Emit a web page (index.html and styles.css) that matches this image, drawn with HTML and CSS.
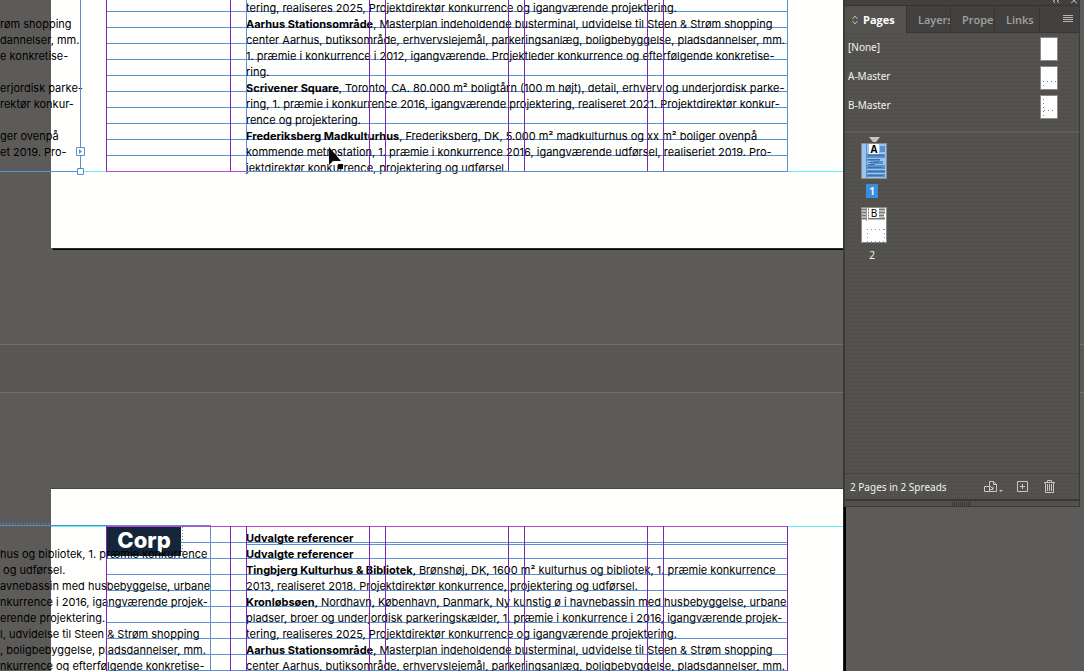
FILE: index.html
```html
<!DOCTYPE html>
<html lang="da">
<head>
<meta charset="utf-8">
<title>Pages</title>
<link rel="stylesheet" href="styles.css">
</head>
<body>
<div class="workspace">
  <main class="pasteboard">
    <section class="spread spread-first">
      <div class="page"></div>
      <svg class="guides" aria-hidden="true">
        <path class="baseline" d="M107 11.5H787M107 27.5H787M107 43.5H787M107 59.5H787M107 75.5H787M107 91.5H787M107 107.5H787M107 123.5H787M107 139.5H787M107 155.5H787"/>
      </svg>
      <div class="spread-content">
        <div class="frame-left">
          <p>&nbsp;</p>
          <p>røm shopping</p>
          <p>dannelser, mm.</p>
          <p>e konkretise-</p>
          <p>&nbsp;</p>
          <p>erjordisk parke-</p>
          <p>rektør konkur-</p>
          <p>&nbsp;</p>
          <p>ger ovenpå</p>
          <p>et 2019. Pro-</p>
        </div>
        <div class="frame-main">
          <p>tering, realiseres 2025, Projektdirektør konkurrence og igangværende projektering.</p>
          <p><b>Aarhus Stationsområde</b>, Masterplan indeholdende busterminal, udvidelse til Steen &amp; Strøm shopping</p>
          <p>center Aarhus, butiksområde, erhvervslejemål, parkeringsanlæg, boligbebyggelse, pladsdannelser, mm.</p>
          <p>1. præmie i konkurrence i 2012, igangværende. Projektleder konkurrence og efterfølgende konkretise-</p>
          <p>ring.</p>
          <p><b>Scrivener Square</b>, Toronto, CA. 80.000 m² boligtårn (100 m højt), detail, erhverv og underjordisk parke-</p>
          <p>ring, 1. præmie i konkurrence 2016, igangværende projektering, realiseret 2021. Projektdirektør konkur-</p>
          <p>rence og projektering.</p>
          <p><b>Frederiksberg Madkulturhus</b>, Frederiksberg, DK, 5.000 m² madkulturhus og xx m² boliger ovenpå</p>
          <p>kommende metrostation, 1. præmie i konkurrence 2016, igangværende udførsel, realiseriet 2019. Pro-</p>
          <p>jektdirektør konkurrence, projektering og udførsel.</p>
        </div>
      </div>
      <svg class="guides" aria-hidden="true">
        <path class="bleed" d="M81 171.5H106M788 171.5H843"/>
        <path class="margin" d="M106 171.5H246"/>
        <path class="column" d="M106.500 0V171M230.500 0V171M369.500 0V171M385.500 0V171M508.500 0V171M524.500 0V171M647.500 0V171M663.500 0V171"/>
        <path class="frame-edge" d="M0 171.500H80M80.500 0V171M246.500 0V171M246 171.500H788M787.500 0V171"/>
        <path class="handle" d="M76.500 147.500h8v8h-8zM77.500 168.500h6v6h-6z"/>
        <path class="handle-arrow" d="M79 149l3 2.500-3 2.500z"/>
        <path class="cursor" d="M329 147v18l4-4h8z"/>
        <path class="cursor-mark" d="M338 164h5v5h-5z"/>
      </svg>
    </section>

    <div class="spread-gap"></div>

    <section class="spread spread-second">
      <div class="page"></div>
      <svg class="guides" aria-hidden="true">
        <path class="baseline" d="M181 53.500H787M246 55.500H787M107 69.500H787M107 85.500H787M107 101.500H787M107 117.500H787M107 133.500H787M107 149.500H787M107 165.500H787M107 181.500H787"/>
      </svg>
      <div class="spread-content">
        <div class="logo">Corp</div>
        <div class="frame-left">
          <p>hus og bibliotek, 1. præmie konkurrence</p>
          <p>&nbsp;og udførsel.</p>
          <p>avnebassin med husbebyggelse, urbane</p>
          <p>nkurrence i 2016, igangværende projek-</p>
          <p>erende projektering.</p>
          <p>l, udvidelse til Steen &amp; Strøm shopping</p>
          <p>, boligbebyggelse, pladsdannelser, mm.</p>
          <p>nkurrence og efterfølgende konkretise-</p>
        </div>
        <div class="frame-main">
          <p><b>Udvalgte referencer</b></p>
          <p><b>Udvalgte referencer</b></p>
          <p><b>Tingbjerg Kulturhus &amp; Bibliotek</b>, Brønshøj, DK, 1600 m² kulturhus og bibliotek, 1. præmie konkurrence</p>
          <p>2013, realiseret 2018. Projektdirektør konkurrence, projektering og udførsel.</p>
          <p><b>Kronløbsøen</b>, Nordhavn, København, Danmark, Ny kunstig ø i havnebassin med husbebyggelse, urbane</p>
          <p>pladser, broer og underjordisk parkeringskælder, 1. præmie i konkurrence i 2016, igangværende projek-</p>
          <p>tering, realiseres 2025, Projektdirektør konkurrence og igangværende projektering.</p>
          <p><b>Aarhus Stationsområde</b>, Masterplan indeholdende busterminal, udvidelse til Steen &amp; Strøm shopping</p>
          <p>center Aarhus, butiksområde, erhvervslejemål, parkeringsanlæg, boligbebyggelse, pladsdannelser, mm.</p>
        </div>
      </div>
      <svg class="guides" aria-hidden="true">
        <path class="bleed" d="M51 37.500H106M788 37.500H843"/>
        <path class="frame-edge" d="M0 36.500H210M210.500 36V182"/>
        <path class="frame-dots" d="M0 34.500H51M182.500 38V64"/>
        <path class="margin" d="M106 37.500H788"/>
        <path class="column" d="M106.500 37V182M230.500 37V182M246.500 37V182M369.500 37V182M385.500 37V182M508.500 37V182M524.500 37V182M647.500 37V182M663.500 37V182M787.500 37V182"/>
      </svg>
    </section>
  </main>

  <aside class="panel">
    <div class="panel-top">
      <svg width="30" height="5" viewBox="0 0 30 5" aria-hidden="true"><path d="M6 0l-2 1 2 2M10 0L8 1l2 2M22 3l4-3M28 3l-4-3" fill="none" stroke="#bbb"/></svg>
    </div>
    <div class="tabs" role="tablist">
      <button class="tab tab-active" role="tab" aria-selected="true"><svg width="6" height="10" viewBox="0 0 6 10" aria-hidden="true"><path d="M.5 4L3 1l2.500 3M.5 6L3 9l2.500-3" fill="none" stroke="#bbb"/></svg>Pages</button>
      <button class="tab" role="tab">Layers</button>
      <button class="tab" role="tab">Prope</button>
      <button class="tab" role="tab">Links</button>
      <button class="menu" aria-label="Panel menu"><svg width="10" height="8" viewBox="0 0 10 8" aria-hidden="true"><path d="M0 .5h10M0 2.500h10M0 4.500h10M0 6.500h10" stroke="#b5b4b2"/></svg></button>
    </div>
    <ul class="masters">
      <li><span>[None]</span><svg class="master-thumb" viewBox="0 0 16 22" aria-hidden="true"></svg></li>
      <li><span>A-Master</span><svg class="master-thumb" viewBox="0 0 16 22" aria-hidden="true"><path d="M2 14.500h13M2 18.500h1" stroke="#5d86a8" stroke-dasharray="1 3"/></svg></li>
      <li><span>B-Master</span><svg class="master-thumb" viewBox="0 0 16 22" aria-hidden="true"><path d="M2.500 3v17M3 14.500h12" stroke="#5d86a8" stroke-dasharray="1 3"/></svg></li>
    </ul>
    <div class="page-list">
      <svg class="marker" width="11" height="6" viewBox="0 0 11 6" aria-hidden="true"><path d="M0 0h11L7 5H4z" fill="#c6c5c3"/></svg>
      <div class="thumb thumb-selected">
        <svg width="24" height="34" viewBox="0 0 24 34" aria-hidden="true">
          <rect width="24" height="34" fill="#9cc4f0"/>
          <path d="M4 0h1v34H4zM18 2h5v6h-5zM5 10h18v4H5zM5 15h13v2H5zM9 17h12v3H9zM5 21h18v4H5zM5 26h18v3H5zM5 30h18v3H5z" fill="#5a8fca"/>
          <path d="M6 11.500h16M6 15.500h12M6 18.500h4M12 18.500h5M6 20.500h7M6 23.500h14M6 27.500h17M6 31.500h15" stroke="#3a72ad"/>
        </svg>
        <b class="thumb-letter">A</b>
      </div>
      <span class="number number-selected">1</span>
      <div class="thumb">
        <svg width="24" height="34" viewBox="0 0 24 34" aria-hidden="true">
          <rect width="24" height="34" fill="#fff"/>
          <path d="M0 1.500h4M0 4.500h4M0 7.500h4M0 10.500h4M6 1.500h17M6 4.500h17M6 7.500h16M6 10.500h17" stroke="#777" stroke-width="2"/>
          <path d="M4.500 0v13" stroke="#999"/>
          <path d="M5 21.500h18M5 33.500h18M5.500 21v12M22.500 21v12" stroke="#6f9cd0" stroke-dasharray="1 3" fill="none"/>
        </svg>
        <span class="thumb-letter">B</span>
      </div>
      <span class="number">2</span>
    </div>
    <footer class="panel-footer">
      <span class="summary">2 Pages in 2 Spreads</span>
      <button aria-label="Edit page size"><svg width="19" height="12" viewBox="0 0 19 12" aria-hidden="true"><path d="M.5 5.500h5v5h-5zM5.500 5.500V.5h4l3 3v7h-7M9.500.5v3h3M6 5l3 3M9 5.500v3H6" fill="none" stroke="#c8c7c5"/><path d="M15 9h4l-2 2z" fill="#c8c7c5"/></svg></button>
      <button aria-label="New page"><svg width="11" height="11" viewBox="0 0 11 11" aria-hidden="true"><path d="M.5.5h10v10H.5zM5.500 3v5M3 5.500h5" fill="none" stroke="#c8c7c5"/></svg></button>
      <button aria-label="Delete page"><svg width="11" height="13" viewBox="0 0 11 13" aria-hidden="true"><path d="M0 2.500h11M3.500 2.500v-2h4v2M1.500 3v9.500h8V3M3.500 4v7M5.500 4v7M7.500 4v7" fill="none" stroke="#c8c7c5"/></svg></button>
    </footer>
    <div class="grip"><span></span></div>
  </aside>
</div>
</body>
</html>
```

FILE: styles.css
```css
* {
  box-sizing: border-box;
}

body {
  margin: 0;
  background: #5c5b59;
  font-family: "Noto Sans", "Open Sans", sans-serif;
}

p, ul {
  margin: 0;
  padding: 0;
}

button {
  border: 0;
  padding: 0;
  background: none;
  font: inherit;
  color: inherit;
}

.workspace {
  position: relative;
  height: 100vh;
  overflow: hidden;
}

/* Pasteboard and spreads */

.pasteboard {
  display: flex;
  flex-direction: column;
  height: 100%;
}

.spread {
  display: grid;
  position: relative;
  grid-template-columns: minmax(0, 1fr) 241px;
}

.spread-first {
  flex: 0 0 250px;
}

.spread-second {
  flex: 1;
  min-height: 0;
}

.page,
.spread-content {
  grid-area: 1 / 1;
}

.page {
  margin-left: 51px;
  background: #fffffe;
}

.spread-first .page {
  margin-bottom: 2px;
  box-shadow: 1px 1px 0 #2c2b29, 2px 2px 0 #000;
}

.spread-second .page {
  box-shadow: 0 -1px 0 #454442, 1px 1px 0 #222, 3px 2px 0 #000;
}

.spread-content {
  display: grid;
  grid-template-columns: 246px minmax(0, 1fr);
  align-items: start;
  font: 11px/16px Inter, "Liberation Sans", Arial, sans-serif;
  color: #000;
  white-space: nowrap;
}

.spread-content b {
  font-weight: 700;
}

.frame-left,
.frame-main,
.logo {
  position: relative;
  grid-row: 1;
}

.frame-left,
.logo {
  grid-column: 1;
}

.frame-main {
  grid-column: 2;
}

.spread-second .spread-content {
  height: 182px;
  overflow: hidden;
}

.spread-second .frame-left {
  margin-top: 57px;
}

.spread-second .frame-main {
  margin-top: 41px;
}

.logo {
  width: 74px;
  height: 29px;
  margin: 38px 0 0 107px;
  background: #15263a;
  color: #fff;
  font: 800 22px/27px Inter, sans-serif;
  text-align: center;
}

.guides {
  position: absolute;
  inset: 0;
  width: 100%;
  height: 100%;
  fill: none;
}

.baseline,
.frame-edge {
  stroke: #5b8fd3;
}

.frame-dots {
  stroke: #5b8fd3;
  stroke-dasharray: 1 2;
}

.column {
  stroke: #7a26b8;
}

.margin {
  stroke: #c045d0;
}

.bleed {
  stroke: #5cf0f0;
}

.handle {
  fill: #fff;
  stroke: #5b8fd3;
}

.handle-arrow {
  fill: #5b8fd3;
}

.cursor,
.cursor-mark {
  fill: #0a0a0a;
}

.spread-gap {
  flex: 0 0 239px;
  background: linear-gradient(#5c5b59 94px, #72716f 94px, #72716f 95px, #595856 95px, #595856 142px, #72716f 142px, #72716f 143px, #5c5b59 143px);
}

/* Floating panel */

.panel {
  display: flex;
  position: absolute;
  top: 0;
  right: 4px;
  flex-direction: column;
  width: 237px;
  height: 507px;
  border: solid #3a3937;
  border-width: 0 1px 1px 2px;
  background-color: #53524f;
  background-image: radial-gradient(#4f4e4b 1px, transparent 1px);
  background-size: 4px 4px;
  color: #f2f2f1;
  font-size: 10px;
  line-height: 14px;
}

.panel-top {
  display: flex;
  flex: none;
  justify-content: flex-end;
  height: 6px;
  border-bottom: 1px solid #343331;
  background: #424140;
}

.tabs {
  display: grid;
  flex: none;
  grid-template-columns: 62px 44px 44px 45px 1fr;
  height: 27px;
  background: #424140;
}

.tab {
  overflow: hidden;
  padding: 1px 0 0 11px;
  border-right: 1px solid #383735;
  border-bottom: 1px solid #383735;
  color: #a3a2a0;
  font-family: "Open Sans", sans-serif;
  font-size: 11px;
  font-weight: 600;
  text-align: left;
  white-space: nowrap;
}

.tab-active {
  display: flex;
  align-items: center;
  gap: 5px;
  padding-left: 7px;
  border-bottom: 0;
  background: #53524f;
  color: #fff;
  font-weight: 700;
}

.menu {
  padding-left: 16px;
  border-bottom: 1px solid #383735;
}

.masters {
  display: flex;
  flex-direction: column;
  gap: 5px;
  padding: 4px 21px 12px 3px;
  border-bottom: 2px solid #5e5d5b;
  list-style: none;
}

.masters li {
  display: flex;
  justify-content: space-between;
  align-items: center;
}

.masters span {
  margin-bottom: 4px;
}

.master-thumb {
  width: 18px;
  height: 24px;
  border: 1px solid #8b8a88;
  background: #fff;
}

.page-list {
  display: flex;
  flex: 1;
  flex-direction: column;
  align-items: center;
  align-self: flex-start;
  padding: 4px 0 0 16px;
}

.marker {
  flex: none;
}

.thumb {
  position: relative;
  width: 26px;
  height: 36px;
  border: 1px solid #8d8c8a;
}

.thumb svg {
  display: block;
}

.thumb-letter {
  position: absolute;
  top: 0;
  left: 7px;
  width: 10px;
  height: 10px;
  background: #fff;
  color: #000;
  font-size: 10px;
  line-height: 10px;
  text-align: center;
}

.number {
  width: 12px;
  margin: 5px 4px 9px 0;
  text-align: center;
}

.number-selected {
  background: #3a8ee0;
  font-weight: 700;
}

.panel-footer {
  display: flex;
  flex: none;
  align-items: center;
  gap: 14px;
  height: 26px;
  padding: 0 24px 0 5px;
  border-top: 1px solid #454442;
}

.panel-footer svg {
  display: block;
}

.summary {
  flex: 1;
}

.panel-footer button:last-child {
  margin-left: 2px;
}

.grip {
  display: flex;
  flex: none;
  justify-content: center;
  height: 7px;
  padding-top: 1px;
  border-top: 2px solid #3a3937;
}

.grip span {
  width: 20px;
  height: 4px;
  background: repeating-linear-gradient(90deg, #3a3937 0 1px, transparent 1px 2px);
}
```
